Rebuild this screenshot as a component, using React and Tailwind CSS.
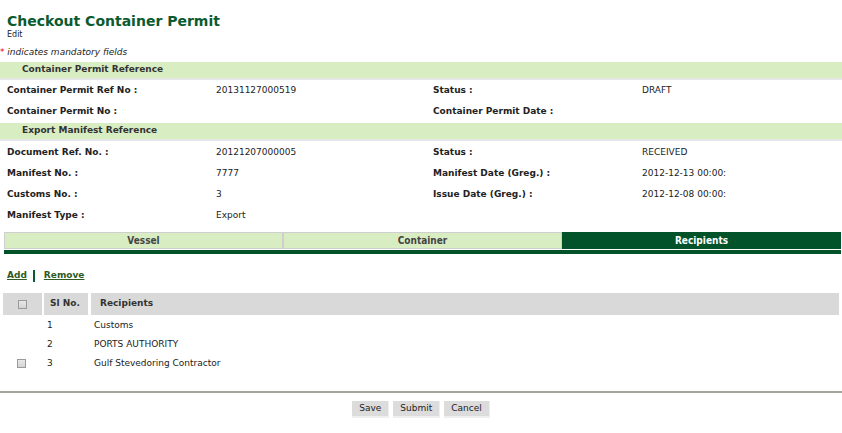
import React from "react";

const fields1 = [
  ["Container Permit Ref No :", "20131127000519", "Status :", "DRAFT"],
  ["Container Permit No :", "", "Container Permit Date :", ""],
];

const fields2 = [
  ["Document Ref. No. :", "20121207000005", "Status :", "RECEIVED"],
  ["Manifest No. :", "7777", "Manifest Date (Greg.) :", "2012-12-13 00:00:"],
  ["Customs No. :", "3", "Issue Date (Greg.) :", "2012-12-08 00:00:"],
  ["Manifest Type :", "Export", "", ""],
];

const recipients = [
  { no: 1, name: "Customs", check: false },
  { no: 2, name: "PORTS AUTHORITY", check: false },
  { no: 3, name: "Gulf Stevedoring Contractor", check: true },
];

function SectionHeader({ title }) {
  return (
    <div className="h-[16px] bg-[#d9edc3] border-b-2 border-[#e6e6e6] box-content flex items-center pl-[22px] text-[9px] font-bold text-[#333]">
      {title}
    </div>
  );
}

function FieldRows({ rows }) {
  return (
    <div className="pl-[7px]">
      {rows.map((r, i) => (
        <div key={i} className="grid grid-cols-[209px_217px_209px_1fr] h-[21px] items-center text-[9px] text-[#222]">
          <div className="font-bold">{r[0]}</div>
          <div>{r[1]}</div>
          <div className="font-bold">{r[2]}</div>
          <div>{r[3]}</div>
        </div>
      ))}
    </div>
  );
}

function Box() {
  return <span className="inline-block w-[9px] h-[9px] border border-[#9a9a9a] bg-gradient-to-b from-[#e8e8e8] to-[#d4d4d4]" />;
}

export default function App() {
  return (
    <div className="w-[842px] h-[433px] bg-white overflow-hidden" style={{ fontFamily: '"DejaVu Sans", Verdana, sans-serif' }}>
      <div className="pl-[7px] pt-[12px]">
        <h1 className="text-[14px] leading-[18px] font-bold text-[#0b5a30]">Checkout Container Permit</h1>
        <div className="text-[8px] leading-[10px] text-[#222]">Edit</div>
      </div>
      <div className="mt-[7px] text-[9px] leading-[11px] italic text-[#222]">
        <span className="text-[#e00] not-italic">*</span> indicates mandatory fields
      </div>
      <div className="mt-[4px]">
        <SectionHeader title="Container Permit Reference" />
      </div>
      <FieldRows rows={fields1} />
      <div className="mt-[1px]">
        <SectionHeader title="Export Manifest Reference" />
      </div>
      <div className="pt-[1px]">
        <FieldRows rows={fields2} />
      </div>

      <div className="mt-[6px] pl-[4px] pr-[1px]">
        <div className="flex h-[17px] text-[10px] font-bold" style={{ fontFamily: '"DejaVu Sans Condensed", "DejaVu Sans", sans-serif' }}>
          <div className="w-[279px] bg-[#d9edc3] border border-[#cfcfcf] text-[#444] flex items-center justify-center">Vessel</div>
          <div className="w-[279px] bg-[#d9edc3] border border-[#cfcfcf] text-[#444] flex items-center justify-center">Container</div>
          <div className="flex-1 bg-[#02522a] text-white flex items-center justify-center">Recipients</div>
        </div>
        <div className="mt-[1px] h-[4px] bg-[#02522a]" />
      </div>

      <div className="pl-[7px] mt-[16px] flex items-center text-[9px] font-bold text-[#2f5a22] h-[12px]">
        <span className="underline">Add</span>
        <span className="inline-block w-[2px] h-[12px] bg-[#0b5a30] ml-[6px] mr-[9px]" />
        <span className="underline">Remove</span>
      </div>

      <div className="mt-[11px] mx-[3px] text-[9px]">
        <div className="grid grid-cols-[41px_47px_1fr] h-[22px] bg-[#d9d9d9] font-bold text-[#333]">
          <div className="flex items-center pl-[15px] border-r-2 border-white"><Box /></div>
          <div className="flex items-center pl-[6px] border-r-[3px] border-white">Sl No.</div>
          <div className="flex items-center pl-[9px]">Recipients</div>
        </div>
        <div className="pt-[1px]">
          {recipients.map((r) => (
            <div key={r.no} className="grid grid-cols-[41px_47px_1fr] h-[19px] items-center text-[#222]">
              <div className="pl-[14px] flex items-center">{r.check && <Box />}</div>
              <div className="pl-[3px]">{r.no}</div>
              <div className="pl-[3px]">{r.name}</div>
            </div>
          ))}
        </div>
      </div>

      <div className="mt-[18px] h-[2px] bg-[#a3a79b]" />

      <div className="mt-[8px] flex justify-center gap-[4px] text-[9px] text-[#222]">
        {["Save", "Submit", "Cancel"].map((b) => (
          <button key={b} className="h-[17px] px-[7px] bg-[#dcdcdc] border-b-2 border-r border-[#efefef]">{b}</button>
        ))}
      </div>
    </div>
  );
}
